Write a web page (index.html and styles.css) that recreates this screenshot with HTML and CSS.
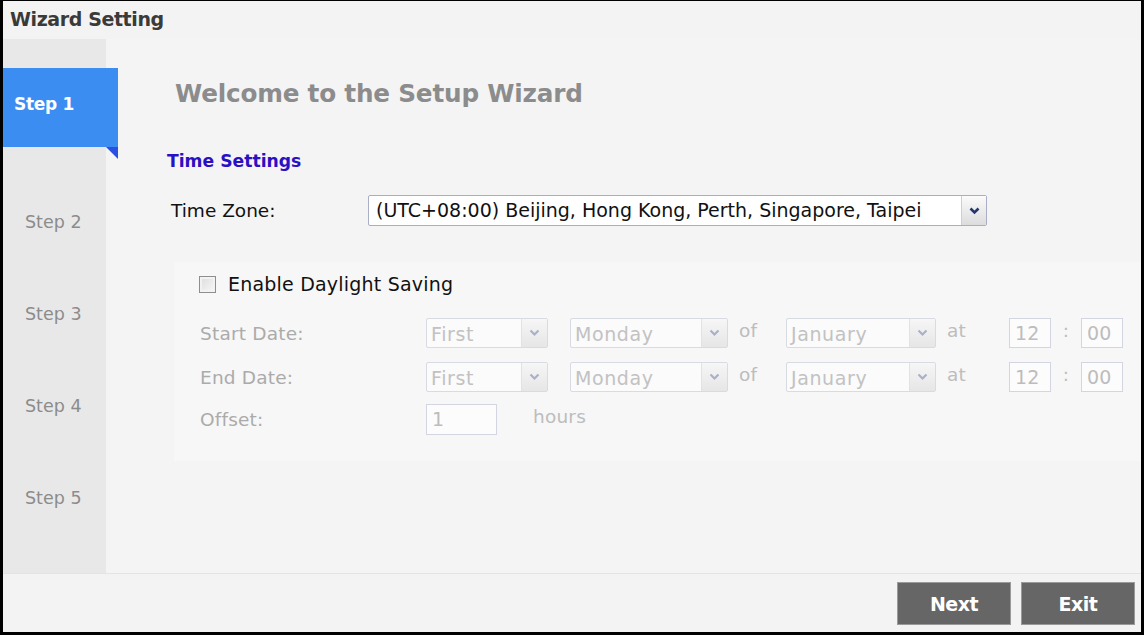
FILE: index.html
```html
<!DOCTYPE html>
<html lang="en">
<head>
    <meta charset="UTF-8">
    <title>Wizard Setting</title>
    <link rel="stylesheet" href="styles.css">
</head>
<body>
    <div class="frame">
        <div class="header">Wizard Setting</div>
        <div class="content">
            <div class="sidebar">
                <div class="step active">Step 1</div>
                <div class="step">Step 2</div>
                <div class="step">Step 3</div>
                <div class="step">Step 4</div>
                <div class="step">Step 5</div>
            </div>
            <div class="main">
                <h1 class="title">Welcome to the Setup Wizard</h1>
                <h2 class="section">Time Settings</h2>
                <div class="tz-row">
                    <span class="tz-label">Time Zone:</span>
                    <div class="select tz-select">
                        <span class="value">(UTC+08:00) Beijing, Hong Kong, Perth, Singapore, Taipei</span>
                        <span class="arrow">
                            <svg width="11" height="8" viewBox="0 0 11 8"><path d="M1.5 1.5 L5.5 5.5 L9.5 1.5" fill="none" stroke="currentColor" stroke-width="2.6"/></svg>
                        </span>
                    </div>
                </div>

                <div class="dst-panel">
                    <label class="check-row">
                        <span class="checkbox"></span>
                        Enable Daylight Saving
                    </label>

                    <div class="date-row first-row">
                        <span class="row-label">Start Date:</span>
                        <div class="select off w-week"><span class="value">First</span><span class="arrow"><svg width="11" height="8" viewBox="0 0 11 8"><path d="M1.5 1.5 L5.5 5.5 L9.5 1.5" fill="none" stroke="currentColor" stroke-width="2.2"/></svg></span></div>
                        <div class="select off w-day"><span class="value">Monday</span><span class="arrow"><svg width="11" height="8" viewBox="0 0 11 8"><path d="M1.5 1.5 L5.5 5.5 L9.5 1.5" fill="none" stroke="currentColor" stroke-width="2.2"/></svg></span></div>
                        <span class="word w-of">of</span>
                        <div class="select off w-month"><span class="value">January</span><span class="arrow"><svg width="11" height="8" viewBox="0 0 11 8"><path d="M1.5 1.5 L5.5 5.5 L9.5 1.5" fill="none" stroke="currentColor" stroke-width="2.2"/></svg></span></div>
                        <span class="word w-at">at</span>
                        <span class="box hour">12</span>
                        <span class="word colon">:</span>
                        <span class="box">00</span>
                    </div>

                    <div class="date-row">
                        <span class="row-label">End Date:</span>
                        <div class="select off w-week"><span class="value">First</span><span class="arrow"><svg width="11" height="8" viewBox="0 0 11 8"><path d="M1.5 1.5 L5.5 5.5 L9.5 1.5" fill="none" stroke="currentColor" stroke-width="2.2"/></svg></span></div>
                        <div class="select off w-day"><span class="value">Monday</span><span class="arrow"><svg width="11" height="8" viewBox="0 0 11 8"><path d="M1.5 1.5 L5.5 5.5 L9.5 1.5" fill="none" stroke="currentColor" stroke-width="2.2"/></svg></span></div>
                        <span class="word w-of">of</span>
                        <div class="select off w-month"><span class="value">January</span><span class="arrow"><svg width="11" height="8" viewBox="0 0 11 8"><path d="M1.5 1.5 L5.5 5.5 L9.5 1.5" fill="none" stroke="currentColor" stroke-width="2.2"/></svg></span></div>
                        <span class="word w-at">at</span>
                        <span class="box hour">12</span>
                        <span class="word colon">:</span>
                        <span class="box">00</span>
                    </div>

                    <div class="date-row offset-row">
                        <span class="row-label">Offset:</span>
                        <span class="box offset">1</span>
                        <span class="word hours">hours</span>
                    </div>
                </div>
            </div>
        </div>
        <div class="footer">
            <button class="btn">Next</button>
            <button class="btn">Exit</button>
        </div>
    </div>
</body>
</html>
```

FILE: styles.css
```css
body {
    margin: 0;
    background: #ffffff;
    font-family: "DejaVu Sans", Verdana, sans-serif;
}
.frame {
    width: 1144px;
    height: 635px;
    box-sizing: border-box;
    border: 3px solid #000;
    border-top-width: 1px;
    background: #f3f3f3;
    display: flex;
    flex-direction: column;
}
.header {
    height: 38px;
    line-height: 36px;
    padding-left: 7px;
    font-size: 19px;
    font-weight: bold;
    color: #3a3a3a;
    letter-spacing: -0.4px;
}
.content {
    height: 534px;
    display: flex;
    border-bottom: 1px solid #e4e4e4;
}
.sidebar {
    width: 103px;
    background: #e8e8e8;
    padding-top: 29px;
    box-sizing: border-box;
}
.step {
    height: 92px;
    display: flex;
    align-items: center;
    padding-left: 22px;
    font-size: 17.5px;
    color: #8c8c8c;
}
.step.active {
    position: relative;
    width: 115px;
    height: 79px;
    margin-bottom: 29px;
    padding-left: 11px;
    box-sizing: border-box;
    background: #3c8df2;
    color: #fff;
    font-weight: bold;
    font-size: 17px;
    letter-spacing: -0.3px;
    padding-bottom: 8px;
}
.step.active::after {
    content: "";
    position: absolute;
    right: 0;
    bottom: -12px;
    border-top: 12px solid #2b4fe0;
    border-left: 12px solid transparent;
}
.main {
    flex: 1;
    background: #f4f4f4;
    padding-left: 61px;
}
.title {
    margin: 38px 0 0 8px;
    font-size: 24.7px;
    line-height: 34px;
    color: #8c8c8c;
    letter-spacing: -0.2px;
}
.section {
    margin: 38px 0 0 0;
    font-size: 17.2px;
    line-height: 24px;
    color: #2a10c4;
}
.tz-row {
    display: flex;
    align-items: center;
    margin: 22px 0 0 4px;
}
.tz-label {
    width: 197px;
    font-size: 18.5px;
    color: #111;
}
.select {
    display: flex;
    height: 31px;
    box-sizing: border-box;
    border: 1px solid #a9aec6;
    background: #fff;
    border-radius: 2px;
}
.select .value {
    flex: 1;
    padding-left: 7px;
    line-height: 29px;
    font-size: 19px;
    color: #111;
    white-space: nowrap;
    overflow: hidden;
}
.select .arrow {
    width: 24px;
    border-left: 1px solid #cfcfcf;
    background: linear-gradient(#fbfbfb, #dcdcdc);
    display: flex;
    align-items: center;
    justify-content: center;
    color: #24386e;
}
.tz-select {
    width: 619px;
}
.dst-panel {
    margin: 36px 0 0 7px;
    height: 199px;
    box-sizing: border-box;
    background: #f7f7f7;
    padding: 9px 0 0 25px;
}
.check-row {
    display: flex;
    align-items: center;
    height: 26px;
    font-size: 19px;
    letter-spacing: 0.2px;
    color: #111;
}
.checkbox {
    width: 15px;
    height: 15px;
    border: 1px solid #8e8e8e;
    background: linear-gradient(135deg, #dcdcdc, #f8f8f8);
    box-shadow: inset 0 0 0 2px #f2f2f2;
    margin-right: 12px;
}
.date-row {
    display: flex;
    align-items: center;
    height: 30px;
    margin-top: 14px;
    padding-left: 1px;
    color: #b4b4b4;
    font-size: 18.5px;
    letter-spacing: 0.2px;
}
.first-row {
    margin-top: 21px;
}
.offset-row {
    height: 31px;
    margin-top: 12px;
}
.row-label {
    width: 226px;
    color: #ababab;
}
.select.off {
    height: 30px;
    border-color: #d9dbe3;
    background: #fbfbfb;
}
.select.off .value {
    color: #c2c2c2;
    padding-left: 4px;
    line-height: 30px;
    letter-spacing: 0.6px;
}
.select.off .arrow {
    width: 25px;
    border-left-color: #e2e2e2;
    background: linear-gradient(#f6f6f6, #e6e6e6);
    color: #a9b1c9;
}
.w-week { width: 122px; }
.w-day { width: 158px; margin-left: 22px; }
.w-month { width: 150px; }
.word {
    color: #bdbdbd;
    margin-bottom: 6px;
}
.w-of { width: 58px; padding-left: 11px; box-sizing: border-box; }
.w-at { width: 73px; padding-left: 11px; box-sizing: border-box; }
.box {
    width: 42px;
    height: 30px;
    box-sizing: border-box;
    border: 1px solid #d3d6e0;
    background: #fcfcfc;
    line-height: 28px;
    padding-left: 5px;
    color: #bdbdbd;
    font-size: 19px;
}
.colon {
    width: 30px;
    text-align: center;
}
.box.offset {
    width: 71px;
    height: 31px;
}
.hours {
    margin-left: 36px;
}
.footer {
    flex: 1;
    display: flex;
    justify-content: flex-end;
    align-items: flex-start;
    gap: 10px;
    padding: 8px 6px 0 0;
    background: #f3f3f3;
}
.btn {
    width: 114px;
    height: 43px;
    background: #666;
    border: 1px solid #9a9a9a;
    color: #fff;
    font-family: "DejaVu Sans", Verdana, sans-serif;
    font-size: 19px;
    font-weight: bold;
    letter-spacing: -0.5px;
    cursor: pointer;
}
```
